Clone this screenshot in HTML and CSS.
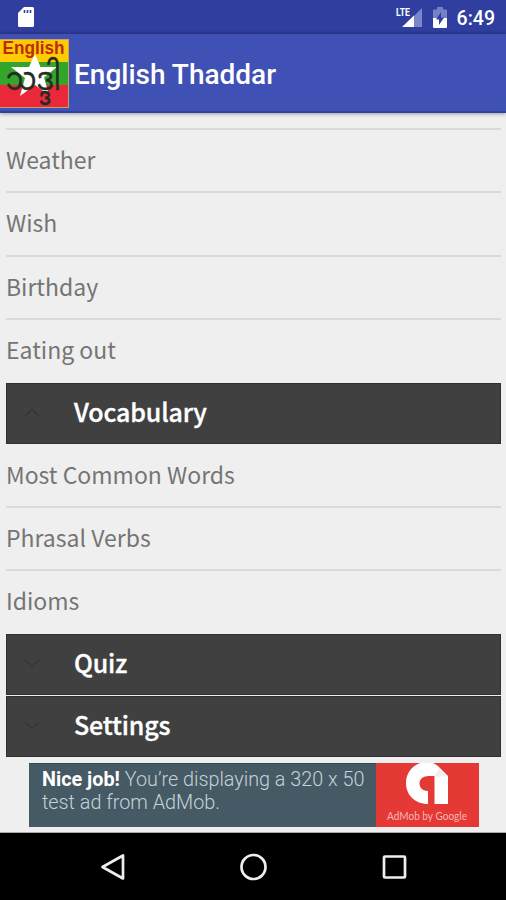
FILE: index.html
```html
<!DOCTYPE html>
<html lang="en">
<head>
<meta charset="utf-8">
<title>English Thaddar</title>
<link rel="stylesheet" href="styles.css">
</head>
<body>
<div class="status">
  <svg class="sd" width="18" height="22" viewBox="0 0 18 22"><path d="M7 0H15.500Q17 0 17 1.500V18.500Q17 20 15.500 20H2.500Q1 20 1 18.500V6Z" fill="#fff"/><path d="M7.500 3V6M10.500 3V6M13.500 3V6" stroke="#303f9f" stroke-width="1.600"/></svg>
  <svg class="signal" width="28" height="22" viewBox="0 0 28 22"><path d="M27 1V20H8Z" fill="#7986c9"/><path d="M19 8.500V20H7Z" fill="#fff"/><text x="1" y="9" class="lte" textLength="14" lengthAdjust="spacingAndGlyphs">LTE</text></svg>
  <svg class="battery" width="14" height="21" viewBox="0 0 14 21"><path d="M0 3.500Q0 2.500 1 2.500H4V0H10V2.500H13Q14 2.500 14 3.500V11H0Z" fill="#7581c4"/><path d="M0 11H14V20Q14 21 13 21H1Q0 21 0 20Z" fill="#fff"/><path d="M8 5L3 12.500H6V18L11 10.500H8Z" fill="#303f9f"/></svg>
  <span class="clock">6:49</span>
</div>
<header class="appbar">
  <svg class="logo" width="69" height="69" viewBox="0 0 69 69">
    <rect width="69" height="69" fill="#c7a267"/><rect width="68" height="23" y="1" fill="#fecb00"/><rect width="68" height="23" y="23" fill="#34a52b"/><rect width="68" height="22" y="46" fill="#ea2839"/>
    <path d="M35 15L40.500 28H57L44 38.500L49 56L35 46L20 57L25 39L11 28H29Z" fill="#fff"/>
    <text x="2.500" y="15" class="logo-en" textLength="62" lengthAdjust="spacingAndGlyphs">English</text>
    <text x="6" y="50.500" class="logo-my" textLength="55" lengthAdjust="spacingAndGlyphs">သဒ္ဒါ</text>
  </svg>
  <h1>English Thaddar</h1>
</header>
<main>
  <ul class="list top">
    <li>Weather</li><li>Wish</li><li>Birthday</li><li>Eating out</li>
  </ul>
  <h2><svg width="16" height="9" viewBox="0 0 16 9"><path d="M1 8L8 1.500L15 8"/></svg>Vocabulary</h2>
  <ul class="list">
    <li>Most Common Words</li><li>Phrasal Verbs</li><li>Idioms</li>
  </ul>
  <h2><svg width="16" height="9" viewBox="0 0 16 9"><path d="M1 1L8 7.500L15 1"/></svg>Quiz</h2>
  <h2 class="last"><svg width="16" height="9" viewBox="0 0 16 9"><path d="M1 1L8 7.500L15 1"/></svg>Settings</h2>
  <div class="ad">
    <p><b>Nice job!</b> You’re displaying a 320 x 50<br>test ad from AdMob.</p>
    <svg class="admob" width="103" height="64" viewBox="0 0 103 64"><rect width="103" height="64" fill="#e53935"/><path d="M52 41C39 41 30 32 30 20C30 8 39 -1 51 -1C56 -1 60 1 63 4L72 13V41H58.500V13H53C47 13 43.500 16 43.500 20.500C43.500 25 47 28 52 28Z" fill="#fff"/><path d="M58.500 13.500H71L63 5Z" fill="#f0eeee"/><text x="11" y="57" class="by" textLength="80" lengthAdjust="spacingAndGlyphs">AdMob by Google</text></svg>
  </div>
</main>
<nav>
  <svg width="28" height="30" viewBox="0 0 28 30"><path d="M24 3.500V26.500L3.500 15Z"/></svg>
  <svg width="28" height="30" viewBox="0 0 28 30"><circle cx="14.500" cy="15" r="12"/></svg>
  <svg width="28" height="30" viewBox="0 0 28 30"><rect x="4" y="4.500" width="21" height="21" rx="1"/></svg>
</nav>
</body>
</html>
```
FILE: styles.css
```css
* { box-sizing: border-box; margin: 0; padding: 0; }
body { width: 506px; height: 900px; overflow: hidden; background: #efefef; font-family: Roboto, sans-serif; display: flex; flex-direction: column; }
svg { display: block; flex: none; }
.status { height: 34px; background: linear-gradient(#303f9f 30px, #2b388c); display: flex; align-items: flex-start; padding: 7px 11px 0 17px; color: #fff; flex: none; }
.signal { margin-left: auto; margin-right: 10px; }
.battery { margin-right: 10px; }
.lte { font: 700 11px Roboto, sans-serif; fill: #fff; }
.clock { font-size: 19.500px; font-weight: 500; line-height: 23px; }
.appbar { height: 79px; flex: none; background: #3f51b5; display: flex; align-items: center; border-bottom: 2px solid #2b43a0; box-shadow: 0 1px 4px rgba(0,0,0,.35); color: #fff; }
.logo { margin-top: 2px; overflow: visible; }
.appbar h1 { font-size: 28px; font-weight: 500; margin-left: 5px; padding-top: 4px; }
.logo-en { font: 700 18px "Liberation Sans", sans-serif; fill: #bd2a12; }
.logo-my { font: 32px "Noto Sans Myanmar", "Padauk", sans-serif; fill: #252a22; stroke: #252a22; stroke-width: .4; }
main { height: 720px; flex: none; padding: 15px 5px 0 6px; border-bottom: 1px solid #aaa; }
.list { list-style: none; }
.list li { height: 63.400px; font: 400 23px/58px "Noto Sans CJK JP", sans-serif; color: #757575; border-top: 2px solid #dadada; letter-spacing: 0; }
.list li:first-child { border-top-color: transparent; }
.list.top li:first-child { border-top-color: #dadada; }
.list + h2 { margin-top: 1px; }
h2 { height: 61px; background: #404040; border: 1px solid #303030; color: #fff; font: 500 25px/56px "Noto Sans CJK JP", sans-serif; display: flex; align-items: center; padding: 0 0 5px 17px; letter-spacing: -.15px; -webkit-text-stroke: .35px #fff; }
h2 svg { margin: 4px 34px 0 0; fill: none; stroke: #363636; stroke-width: 1.600; }
h2 + .list { margin-top: -1px; }
h2.last { margin-top: 1px; }
.ad { display: flex; width: 450px; height: 64px; margin: 6px 0 0 23px; background: #455a64; box-shadow: inset 0 1px #294a59; }
.ad p { width: 347px; padding: 5px 0 0 13px; color: #c5d2da; font-size: 19.800px; line-height: 23px; font-weight: 300; white-space: nowrap; }
.ad b { color: #fff; font-weight: 700; }
.by { font: 400 12px Lato, sans-serif; fill: #f7b6b4; }
nav { flex: 1; background: #000; display: flex; justify-content: center; gap: 112.500px; padding-top: 18.500px; }
nav svg { fill: none; stroke: #eee; stroke-width: 2.700; stroke-linejoin: round; }
```
